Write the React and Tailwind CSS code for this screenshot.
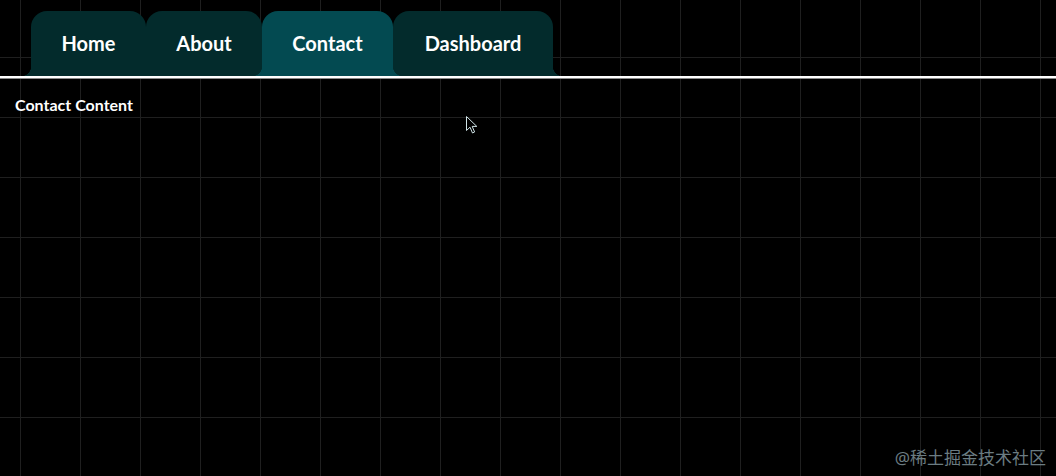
import React from "react";

const tabs = [
  { label: "Home", w: "w-[115px]" },
  { label: "About", w: "w-[116px]" },
  { label: "Contact", w: "w-[131px]", active: true },
  { label: "Dashboard", w: "w-[160px]" },
];

function Tab({ label, w, active }) {
  return (
    <div
      className={`relative ${w} h-[65px] rounded-t-[16px] flex items-center justify-center text-white text-[20px] font-bold ${
        active ? "z-20 bg-[#034a51]" : "z-10 bg-[#032b2c]"
      }`}
    >
      <span
        className={`absolute bottom-0 -left-2.5 size-2.5 ${
          active
            ? "bg-[radial-gradient(circle_at_0_0,transparent_10px,#034a51_10.5px)]"
            : "bg-[radial-gradient(circle_at_0_0,transparent_10px,#032b2c_10.5px)]"
        }`}
      />
      <span
        className={`absolute bottom-0 -right-2.5 size-2.5 ${
          active
            ? "bg-[radial-gradient(circle_at_100%_0,transparent_10px,#034a51_10.5px)]"
            : "bg-[radial-gradient(circle_at_100%_0,transparent_10px,#032b2c_10.5px)]"
        }`}
      />
      <span className="pb-px">{label}</span>
    </div>
  );
}

export default function App() {
  return (
    <div className="relative w-[1056px] h-[476px] overflow-hidden bg-black bg-[image:linear-gradient(to_right,#1f1f1f_1px,transparent_1px),linear-gradient(to_bottom,#1f1f1f_1px,transparent_1px)] bg-[size:60px_60px] bg-[position:20px_57px] font-['Lato','Noto_Sans',sans-serif]">
      <nav className="flex pl-[31px] pt-[11px]">
        {tabs.map((t) => (
          <Tab key={t.label} {...t} />
        ))}
      </nav>
      <div className="h-[2px] bg-white" />
      <div className="h-px bg-[#8a8a8a]" />
      <div className="pl-[15px] pt-[14px] text-white text-[16px] font-bold leading-6">
        Contact Content
      </div>

      <svg
        className="absolute left-[466px] top-[116px]"
        width="12"
        height="19"
        viewBox="0 0 12 19"
      >
        <path
          d="M0.5 0.5 L0.5 14.5 L4 11.2 L6.5 17 L8.6 16 L6.2 10.4 L10.8 10.4 Z"
          fill="#000"
          stroke="#cfe3e6"
          strokeWidth="1"
        />
      </svg>

      <div className="absolute right-[10px] bottom-[6px] text-[17px] text-[#6b7c82] font-['Noto_Sans','Noto_Sans_CJK_SC',sans-serif]">
        @稀土掘金技术社区
      </div>
    </div>
  );
}
